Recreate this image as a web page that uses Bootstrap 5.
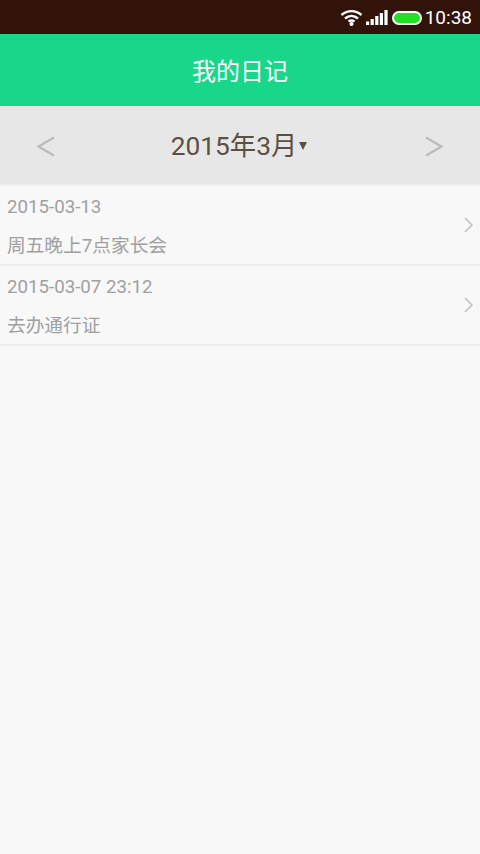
<!DOCTYPE html>
<html lang="zh">
<head>
<meta charset="utf-8">
<title>我的日记</title>
<link rel="stylesheet" href="https://cdn.jsdelivr.net/npm/bootstrap@5.3.0/dist/css/bootstrap.min.css">
<style>
html,body{height:100%}
body{background:#f8f8f8;font-family:Roboto,"Noto Sans CJK SC",sans-serif;width:480px;height:854px;overflow:hidden}
.sysbar{height:34px;background:#311309;color:#fff;font-size:19px;line-height:34px;padding-right:8px;padding-top:1px}
.sysbar svg{display:block}
.wifi-ic{margin-right:3px}
.bars-ic{margin-right:4px}
.batt-ic{margin-right:3px}
.apphead{height:72px;background:#19d78a;color:#fff;font-size:24px;padding-top:3px}
.monthbar{height:78px;background:#e7e7e7;padding:3px 36px 0;color:#5a5044;font-size:26.3px}
.caret-down{width:0;height:0;border-left:4px solid transparent;border-right:4px solid transparent;border-top:8px solid #5a5044;margin-left:2px;margin-top:-2px}
.monthmid{margin-left:-2px}
.rowitem{height:80px;border-bottom:2px solid #ecebeb;padding:0 7px;color:#a0a0a0;font-size:18.7px;position:relative}
.firstgap{height:2px;background:#f0eeee}
.dateline{height:38px;padding-top:8px;line-height:26px}
.noteline{height:40px;padding-top:9px;line-height:26px}
.chev{position:absolute;right:7px;top:31px}
</style>
</head>
<body>
<div class="sysbar d-flex justify-content-end align-items-center">
  <svg class="wifi-ic" width="23" height="17" viewBox="0 0 22 17" fill="none" stroke="#fff" stroke-width="2.400"><path d="M1 6C7 .8 15 .8 21 6M4.500 9.500C8.500 6 13.500 6 17.500 9.500M8 12.500C9.800 11.200 12.200 11.200 14 12.500"/><circle cx="11" cy="15" r="2" fill="#fff" stroke="none"/></svg>
  <svg class="bars-ic" width="22" height="15" viewBox="0 0 22 15" fill="#fff"><rect x="0" y="11.500" width="3.200" height="3.500"/><rect x="4.600" y="9" width="3.200" height="6"/><rect x="9.200" y="6" width="3.200" height="9"/><rect x="13.800" y="3" width="3.200" height="12"/><rect x="18.400" y="0" width="3.200" height="15"/></svg>
  <svg class="batt-ic" width="30" height="14" viewBox="0 0 30 14"><rect x="1" y="1" width="28" height="12" rx="6" fill="#24e024" stroke="#fff" stroke-width="2"/></svg>
  <span>10:38</span>
</div>
<div class="apphead d-flex justify-content-center align-items-center">我的日记</div>
<div class="monthbar d-flex justify-content-between align-items-center">
  <svg width="19" height="21" viewBox="0 0 19 21" fill="none" stroke="#bbb" stroke-width="2.300"><path d="M18 1.500 2.500 10.500 18 19.500"/></svg>
  <div class="monthmid d-flex align-items-center"><span>2015年3月</span><span class="caret-down"></span></div>
  <svg width="19" height="21" viewBox="0 0 19 21" fill="none" stroke="#bbb" stroke-width="2.300"><path d="M1 1.500 16.500 10.500 1 19.500"/></svg>
</div>
<div class="firstgap"></div>
<div class="rowitem">
  <div class="dateline">2015-03-13</div>
  <div class="noteline">周五晚上7点家长会</div>
  <svg class="chev" width="9" height="16" viewBox="0 0 9 16" fill="none" stroke="#bdbdbd" stroke-width="1.500"><path d="M1 1l7 7-7 7"/></svg>
</div>
<div class="rowitem">
  <div class="dateline">2015-03-07 23:12</div>
  <div class="noteline">去办通行证</div>
  <svg class="chev" width="9" height="16" viewBox="0 0 9 16" fill="none" stroke="#bdbdbd" stroke-width="1.500"><path d="M1 1l7 7-7 7"/></svg>
</div>
<script src="https://cdn.jsdelivr.net/npm/bootstrap@5.3.0/dist/js/bootstrap.bundle.min.js"></script>
</body>
</html>
